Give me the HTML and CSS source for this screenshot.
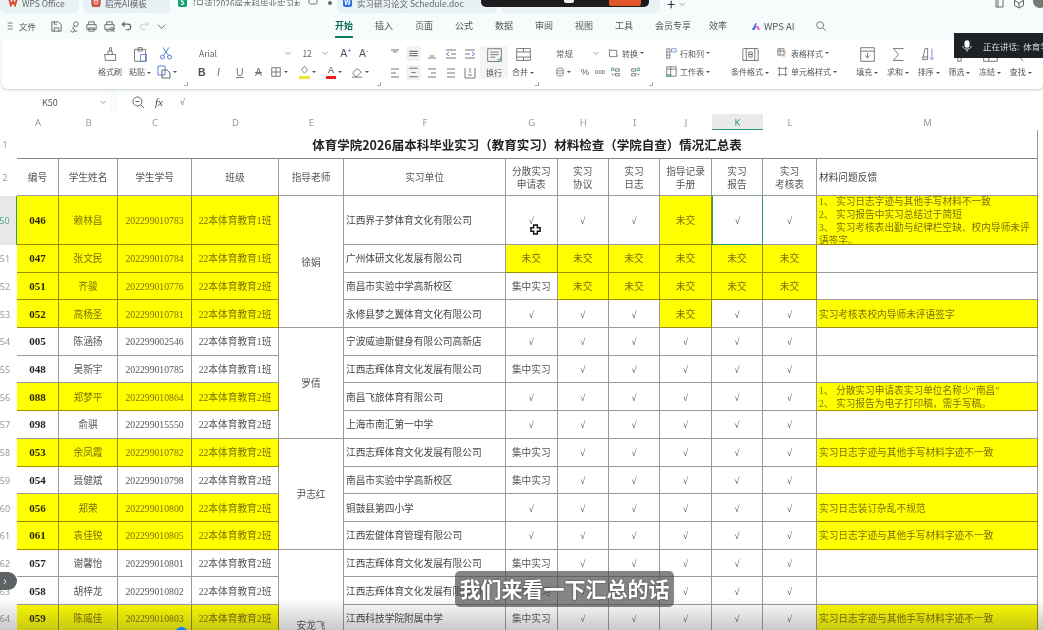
FILE: index.html
```html
<!DOCTYPE html>
<html lang="zh-CN">
<head>
    <meta charset="UTF-8">
    <title>WPS Office</title>
    <link rel="stylesheet" href="styles.css">
</head>
<body>
<div class="page">
    <div class="tabs">
        <div class="tab t-wps"><svg class="logo" viewBox="0 0 12 12"><path d="M1 1 L3.5 10 L6 5 L8.5 10 L11 1" fill="none" stroke="#e0452f" stroke-width="2.2"/></svg>WPS Office</div>
        <div class="tab t-tpl"><svg class="logo" viewBox="0 0 12 12"><rect x="1" y="0" width="10" height="12" rx="3" fill="#ee4c3c"/><path d="M6 2v3" stroke="#fff"/><circle cx="6" cy="6" r="2.4" fill="none" stroke="#fff"/></svg>稻壳AI模板</div>
        <div class="tab t-active"><span class="doc doc-s">S</span><span class="t-name">[只读]2026届本科毕业实习材</span><svg class="t-ico" viewBox="0 0 10 10"><rect x="1" y="1" width="8" height="6" rx="1.5" fill="none" stroke="#777"/></svg><span class="t-dot"></span></div>
        <div class="tab t-doc"><span class="doc doc-w">W</span>实习研习论文 Schedule.doc</div>
        <div class="tab t-next"><span class="doc doc-w"></span></div>
        <div class="tab-add">+ <svg class="chev" viewBox="0 0 8 8"><path d="M1.5 3 L4 5.5 L6.5 3"/></svg></div>
        <div class="win-btns">
            <svg viewBox="0 0 12 12"><path d="M3 1h7v9H3z M5 1v9"/></svg>
            <svg viewBox="0 0 12 12"><path d="M6 1l4.5 2.5v5L6 11 1.5 8.5v-5z M1.5 3.5L6 6l4.5-2.5 M6 6v5"/></svg>
            <span class="avatar"></span>
        </div>
    </div>

    <div class="menubar">
        <div class="quick">
            <svg class="q burger" viewBox="0 0 12 12"><path d="M2 2.5h6 M2 6h6 M2 9.5h6"/></svg>
            <span class="file">文件</span>
            <span class="q-sep"></span>
            <svg class="q" viewBox="0 0 14 14"><path d="M2 2h7l3 3v7H2z M4.5 12V8.5h5V12 M4.5 2v2.5h3"/></svg>
            <svg class="q" viewBox="0 0 14 14"><circle cx="8.5" cy="4.5" r="2.5"/><path d="M7 6.500L5 9 M5 9a2 2 0 1 1-2 2 M7 12h3"/></svg>
            <svg class="q" viewBox="0 0 14 14"><path d="M4 5V2h6v3 M2 5h10v5H2z M4 8.5h6V12H4z"/></svg>
            <svg class="q" viewBox="0 0 14 14"><path d="M4 5V2h6v3 M2 5h10v5H2z M4 10v2h3"/><circle cx="9.5" cy="10" r="2"/><path d="M11 11.5l1.5 1.5"/></svg>
            <svg class="q" viewBox="0 0 14 14"><path d="M5 2L2.5 4.5 5 7 M2.5 4.5h6a3 3 0 0 1 0 6H6" stroke-width="1.3"/></svg>
            <svg class="q q-off" viewBox="0 0 14 14"><path d="M9 2l2.5 2.5L9 7 M11.500 4.5h-6a3 3 0 0 0 0 6H8"/></svg>
            <svg class="q" viewBox="0 0 14 14"><path d="M3 5l4 4 4-4"/></svg>
        </div>
        <nav class="nav">
            <a class="nav-item on">开始</a>
            <a class="nav-item">插入</a>
            <a class="nav-item">页面</a>
            <a class="nav-item">公式</a>
            <a class="nav-item">数据</a>
            <a class="nav-item">审阅</a>
            <a class="nav-item">视图</a>
            <a class="nav-item">工具</a>
            <a class="nav-item wide">会员专享</a>
            <a class="nav-item">效率</a>
            <a class="nav-ai"><svg viewBox="0 0 12 10"><path d="M1 9L5.5 1H7L4.5 9z" fill="#3b5bf0"/><path d="M6 5l2-1 3 5H8z" fill="#ef4f9a"/></svg>WPS AI</a>
            <svg class="nav-search" viewBox="0 0 14 14"><circle cx="6" cy="6" r="4"/><path d="M9 9l3.5 3.5"/></svg>
        </nav>
    </div>

    <div class="ribbon">
        <div class="big w-brush">
            <svg viewBox="0 0 20 20"><path d="M3 10h13v7H4z M7 10V6h5v4 M9 6V2h2v4"/></svg>
            <span>格式刷</span>
        </div>
        <div class="big w-paste">
            <svg viewBox="0 0 20 20"><path d="M3 4h13v14H3z M7 2h5v4H7z"/><path class="blue" d="M10 10h7v8h-7z"/></svg>
            <span>粘贴<i class="caret"></i></span>
        </div>
        <div class="col w-clip launch">
            <div class="row"><svg class="ico blue" viewBox="0 0 14 14"><circle cx="3.5" cy="11" r="2"/><circle cx="10.5" cy="11" r="2"/><path d="M4.5 9.5L10 1.5 M9.5 9.5L4 1.5"/></svg></div>
            <div class="row"><svg class="ico" viewBox="0 0 14 14"><path class="blue" d="M1 1h7v9H1z"/><path d="M5 5h5l3 3v5H5z"/></svg><i class="caret"></i></div>
        </div>
        <div class="col w-font launch">
            <div class="row">
                <span class="select s-font">Arial<svg class="chev" viewBox="0 0 8 8"><path d="M1.5 3L4 5.5 6.5 3"/></svg></span>
                <span class="select s-size">12<svg class="chev" viewBox="0 0 8 8"><path d="M1.5 3L4 5.5 6.5 3"/></svg></span>
                <span class="glyph g-a">A<sup class="up">+</sup></span>
                <span class="glyph g-a">A<sup>-</sup></span>
            </div>
            <div class="row font-row">
                <b class="glyph">B</b>
                <em class="glyph">I</em>
                <u class="glyph">U</u>
                <s class="glyph">A</s>
                <span class="ctl c-border"><svg class="ico" viewBox="0 0 14 14"><path d="M2 2h10v10H2z M7 2v10 M2 7h10"/></svg><i class="caret"></i></span>
                <span class="ctl c-fill"><span class="swatch sw-y"><svg class="ico" viewBox="0 0 14 12"><path d="M7 1l4 5-4 4-4-4z"/></svg></span><i class="caret"></i></span>
                <span class="ctl c-color"><span class="swatch sw-r">A</span><i class="caret"></i></span>
                <span class="ctl c-erase"><svg class="ico" viewBox="0 0 14 14"><path d="M2 8l5-5 5 4-5 5H5z M1 13h12"/></svg><i class="caret"></i></span>
            </div>
        </div>
        <div class="aligns">
            <svg class="ico" viewBox="0 0 14 14"><path d="M3 3h8 M5 5h4"/></svg>
            <svg class="ico tint" viewBox="0 0 14 14"><path d="M3 5h8 M3 7h8 M3 9h8"/></svg>
            <svg class="ico" viewBox="0 0 14 14"><path d="M5 9h4 M3 11h8"/></svg>
            <svg class="ico" viewBox="0 0 14 14"><path d="M2 3h10 M2 11h10 M7 7h5"/><path class="blue" d="M5 5L2.5 7 5 9"/></svg>
            <svg class="ico" viewBox="0 0 14 14"><path d="M2 3h10 M2 11h10 M2 7h5"/><path class="blue" d="M9 5l2.5 2L9 9"/></svg>
            <svg class="ico" viewBox="0 0 14 14"><path d="M3 3h8 M3 7h5 M3 11h8"/></svg>
            <svg class="ico tint" viewBox="0 0 14 14"><path d="M3 3h8 M5 7h4 M3 11h8"/></svg>
            <svg class="ico" viewBox="0 0 14 14"><path d="M3 3h8 M6 7h5 M3 11h8"/></svg>
            <svg class="ico" viewBox="0 0 14 14"><path d="M3 3h8 M3 7h8 M3 11h8"/></svg>
            <svg class="ico" viewBox="0 0 14 14"><path d="M2 2v10 M12 2v10 M2 12h10 M5 9h4 M7 2v5"/></svg>
        </div>
        <div class="big w-wrap">
            <svg viewBox="0 0 20 20"><path d="M2 2h16v15H2z M5 6h10 M5 9h10 M5 12h6"/><path class="green" d="M17 12v3h-4"/></svg>
            <span>换行</span>
        </div>
        <div class="big w-merge launch">
            <svg viewBox="0 0 20 20"><path d="M2 3h16v14H2z M2 7h16 M2 13h16 M10 3v4 M10 13v4"/></svg>
            <span>合并<i class="caret"></i></span>
        </div>
        <div class="col w-num launch">
            <div class="row">
                <span class="select s-num">常规<svg class="chev" viewBox="0 0 8 8"><path d="M1.5 3L4 5.5 6.5 3"/></svg></span>
                <span class="ctl c-conv"><svg class="ico" viewBox="0 0 14 14"><path d="M2 3h9v8H2z"/><path class="blue" d="M1 2h2 M11 10h2"/></svg><span class="lbl">转换</span><i class="caret"></i></span>
            </div>
            <div class="row num-row">
                <span class="ctl c-db"><svg class="ico" viewBox="0 0 14 14"><ellipse cx="7" cy="3.5" rx="4.500" ry="2"/><path d="M2.5 3.5v7c0 2.500 9 2.500 9 0v-7 M2.5 7c0 2.500 9 2.500 9 0"/></svg><i class="caret"></i></span>
                <span class="glyph g-pct">%</span>
                <span class="glyph g-thou">000</span>
                <svg class="ico" viewBox="0 0 14 14"><path class="green" d="M2 2h3v3H2z"/><path d="M7 3h5v3H7z M7 9h5v3H7z M2 9l2 2 2-2"/></svg>
                <svg class="ico" viewBox="0 0 14 14"><path class="green" d="M9 2h3v3H9z"/><path d="M2 3h5v3H2z M2 9h5v3H2z M8 9l2 2 2-2"/></svg>
            </div>
        </div>
        <div class="col w-rows">
            <div class="row"><svg class="ico" viewBox="0 0 14 14"><path d="M1 1h4v12H1z M1 5h4 M1 9h4"/><path class="blue" d="M7 1h6v4H7z"/></svg><span class="lbl">行和列</span><i class="caret"></i></div>
            <div class="row"><svg class="ico" viewBox="0 0 14 14"><path d="M1 1h12v12H1z M1 4h12 M6 1v12"/><path class="green" d="M1 11h5v2H1z"/></svg><span class="lbl">工作表</span><i class="caret"></i></div>
        </div>
        <div class="big w-cond">
            <svg viewBox="0 0 20 20"><path d="M1 4v13 M19 4v13 M1 3h18 M1 17h18 M5 3v14 M15 3v14 M8 7h4v3H8z M8 10h4v3H8z"/></svg>
            <span>条件格式<i class="caret"></i></span>
        </div>
        <div class="col w-style">
            <div class="row"><svg class="ico" viewBox="0 0 14 14"><path d="M1 1h8v8H1z M1 4h8 M4 1v8"/><path class="orange" d="M6 11L12 4 M8 12l3-3"/></svg><span class="lbl">表格样式</span><i class="caret"></i></div>
            <div class="row"><svg class="ico" viewBox="0 0 14 14"><path d="M3 1v12 M11 1v12 M1 3h12 M1 11h12"/></svg><span class="lbl">单元格样式</span><i class="caret"></i></div>
        </div>
        <div class="big w-end">
            <svg viewBox="0 0 20 20"><path d="M2 2h16v16H2z M2 6h16 M10 8v6 M7 11l3 3 3-3"/></svg>
            <span>填充<i class="caret"></i></span>
        </div>
        <div class="big w-end">
            <svg viewBox="0 0 20 20"><path d="M16 3H4l6 7-6 7h12"/></svg>
            <span>求和<i class="caret"></i></span>
        </div>
        <div class="big w-end">
            <svg viewBox="0 0 20 20"><path d="M3 16L6 3h3v13H3 M3 13h6"/><path class="blue" d="M14 3v13 M11.5 13.5L14 16l2.5-2.5"/></svg>
            <span>排序<i class="caret"></i></span>
        </div>
        <div class="big w-end">
            <svg viewBox="0 0 20 20"><path d="M8 12v6h4v-6"/></svg>
            <span>筛选<i class="caret"></i></span>
        </div>
        <div class="big w-end">
            <svg viewBox="0 0 20 20"><path d="M2 11v7h16v-7 M8 11v7"/></svg>
            <span>冻结<i class="caret"></i></span>
        </div>
        <div class="big w-end">
            <svg viewBox="0 0 20 20"><path d="M8 12l5 6"/></svg>
            <span>查找<i class="caret"></i></span>
        </div>
    </div>

    <div class="formula">
        <div class="namebox">K50<svg class="chev" viewBox="0 0 8 8"><path d="M1.5 3L4 5.5 6.5 3"/></svg></div>
        <div class="fx">
            <svg class="ico" viewBox="0 0 14 14"><circle cx="6.5" cy="6.5" r="4.5"/><path d="M4.5 6.5h4 M10 10l3 3"/></svg>
            <i class="fx-label">fx</i>
            <span class="fx-check">√</span>
        </div>
    </div>

    <div class="sheet">
        <div class="corner"></div>
        <div class="ch">A</div><div class="ch">B</div><div class="ch">C</div><div class="ch">D</div><div class="ch">E</div><div class="ch">F</div><div class="ch">G</div><div class="ch">H</div><div class="ch">I</div><div class="ch">J</div><div class="ch sel">K</div><div class="ch">L</div><div class="ch">M</div>

        <div class="rh">1</div>
        <div class="title">体育学院2026届本科毕业实习（教育实习）材料检查（学院自查）情况汇总表</div>

        <div class="rh">2</div>
        <div class="c">编号</div><div class="c">学生姓名</div><div class="c">学生学号</div><div class="c">班级</div><div class="c">指导老师</div><div class="c">实习单位</div><div class="c">分散实习<br>申请表</div><div class="c">实习<br>协议</div><div class="c">实习<br>日志</div><div class="c">指导记录<br>手册</div><div class="c">实习<br>报告</div><div class="c">实习<br>考核表</div><div class="c l">材料问题反馈</div>

        <div class="rh sel">50</div>
        <div class="c id y">046</div><div class="c y">赖林昌</div><div class="c y">202299010783</div><div class="c y">22本体育教育1班</div>
        <div class="c m4">徐娟</div>
        <div class="c l">江西界子梦体育文化有限公司</div><div class="c">√</div><div class="c">√</div><div class="c">√</div><div class="c y">未交</div><div class="c active">√</div><div class="c">√</div>
        <div class="c l y note">1、 实习日志字迹与其他手写材料不一致<br>2、 实习报告中实习总结过于简短<br>3、 实习考核表出勤与纪律栏空缺、校内导师未评语签字。</div>

        <div class="rh">51</div>
        <div class="c id y">047</div><div class="c y">张文民</div><div class="c y">202299010784</div><div class="c y">22本体育教育1班</div>
        <div class="c l">广州体研文化发展有限公司</div><div class="c y">未交</div><div class="c y">未交</div><div class="c y">未交</div><div class="c y">未交</div><div class="c y">未交</div><div class="c y">未交</div><div class="c"></div>

        <div class="rh">52</div>
        <div class="c id y">051</div><div class="c y">齐骏</div><div class="c y">202299010776</div><div class="c y">22本体育教育2班</div>
        <div class="c l">南昌市实验中学高新校区</div><div class="c">集中实习</div><div class="c y">未交</div><div class="c y">未交</div><div class="c y">未交</div><div class="c y">未交</div><div class="c y">未交</div><div class="c"></div>

        <div class="rh">53</div>
        <div class="c id y">052</div><div class="c y">高杨圣</div><div class="c y">202299010781</div><div class="c y">22本体育教育2班</div>
        <div class="c l">永修县梦之翼体育文化有限公司</div><div class="c">√</div><div class="c">√</div><div class="c">√</div><div class="c y">未交</div><div class="c">√</div><div class="c">√</div><div class="c l y">实习考核表校内导师未评语签字</div>

        <div class="rh">54</div>
        <div class="c id">005</div><div class="c">陈涵扬</div><div class="c">202299002546</div><div class="c">22本体育教育1班</div>
        <div class="c m4">罗倩</div>
        <div class="c l">宁波威迪斯健身有限公司高新店</div><div class="c">√</div><div class="c">√</div><div class="c">√</div><div class="c">√</div><div class="c">√</div><div class="c">√</div><div class="c"></div>

        <div class="rh">55</div>
        <div class="c id">048</div><div class="c">吴新宇</div><div class="c">202299010785</div><div class="c">22本体育教育1班</div>
        <div class="c l">江西志辉体育文化发展有限公司</div><div class="c">集中实习</div><div class="c">√</div><div class="c">√</div><div class="c">√</div><div class="c">√</div><div class="c">√</div><div class="c"></div>

        <div class="rh">56</div>
        <div class="c id y">088</div><div class="c y">郑梦平</div><div class="c y">202299010864</div><div class="c y">22本体育教育2班</div>
        <div class="c l">南昌飞旅体育有限公司</div><div class="c">√</div><div class="c">√</div><div class="c">√</div><div class="c">√</div><div class="c">√</div><div class="c">√</div>
        <div class="c l y note">1、 分散实习申请表实习单位名称少“南昌”<br>2、 实习报告为电子打印稿，需手写稿。</div>

        <div class="rh">57</div>
        <div class="c id">098</div><div class="c">俞骐</div><div class="c">202299015550</div><div class="c">22本体育教育2班</div>
        <div class="c l">上海市南汇第一中学</div><div class="c">√</div><div class="c">√</div><div class="c">√</div><div class="c">√</div><div class="c">√</div><div class="c">√</div><div class="c"></div>

        <div class="rh">58</div>
        <div class="c id y">053</div><div class="c y">余凤霞</div><div class="c y">202299010782</div><div class="c y">22本体育教育2班</div>
        <div class="c m4">尹志红</div>
        <div class="c l">江西志辉体育文化发展有限公司</div><div class="c">集中实习</div><div class="c">√</div><div class="c">√</div><div class="c">√</div><div class="c">√</div><div class="c">√</div><div class="c l y">实习日志字迹与其他手写材料字迹不一致</div>

        <div class="rh">59</div>
        <div class="c id">054</div><div class="c">聂健斌</div><div class="c">202299010798</div><div class="c">22本体育教育2班</div>
        <div class="c l">南昌市实验中学高新校区</div><div class="c">集中实习</div><div class="c">√</div><div class="c">√</div><div class="c">√</div><div class="c">√</div><div class="c">√</div><div class="c"></div>

        <div class="rh">60</div>
        <div class="c id y">056</div><div class="c y">郑荣</div><div class="c y">202299010800</div><div class="c y">22本体育教育2班</div>
        <div class="c l">铜鼓县第四小学</div><div class="c">√</div><div class="c">√</div><div class="c">√</div><div class="c">√</div><div class="c">√</div><div class="c">√</div><div class="c l y">实习日志装订杂乱不规范</div>

        <div class="rh">61</div>
        <div class="c id y">061</div><div class="c y">袁佳锐</div><div class="c y">202299010805</div><div class="c y">22本体育教育2班</div>
        <div class="c l">江西宏健体育管理有限公司</div><div class="c">√</div><div class="c">√</div><div class="c">√</div><div class="c">√</div><div class="c">√</div><div class="c">√</div><div class="c l y">实习日志字迹与其他手写材料字迹不一致</div>

        <div class="rh">62</div>
        <div class="c id">057</div><div class="c">谢馨怡</div><div class="c">202299010801</div><div class="c">22本体育教育2班</div>
        <div class="c m5">安龙飞</div>
        <div class="c l">江西志辉体育文化发展有限公司</div><div class="c">集中实习</div><div class="c">√</div><div class="c">√</div><div class="c">√</div><div class="c">√</div><div class="c">√</div><div class="c"></div>

        <div class="rh">63</div>
        <div class="c id">058</div><div class="c">胡梓龙</div><div class="c">202299010802</div><div class="c">22本体育教育2班</div>
        <div class="c l">江西志辉体育文化发展有限公司</div><div class="c">集中实习</div><div class="c">√</div><div class="c">√</div><div class="c">√</div><div class="c">√</div><div class="c">√</div><div class="c"></div>

        <div class="rh">64</div>
        <div class="c id y">059</div><div class="c y">陈威佳</div><div class="c y">202299010803</div><div class="c y">22本体育教育2班</div>
        <div class="c l">江西科技学院附属中学</div><div class="c">集中实习</div><div class="c">√</div><div class="c">√</div><div class="c">√</div><div class="c">√</div><div class="c">√</div><div class="c l y">实习日志字迹与其他手写材料字迹不一致</div>
    </div>

    <!-- things from the screen recording that sit over the app -->
    <div class="rec-bar"><span class="rec-mark"></span><span class="rec-btn"></span></div>
    <div class="speaking">
        <svg viewBox="0 0 12 16"><rect x="3" y="1" width="6" height="9" rx="3" fill="#fff"/><path d="M1 8c0 5 10 5 10 0 M6 12v3" stroke="#fff" fill="none"/></svg>
        <span class="sp-sep"></span>正在讲话:&nbsp; 体育学院
    </div>
    <svg class="cursor" viewBox="0 0 12 12"><path d="M4 1h4v3h3v4H8v3H4V8H1V4h3z" fill="#fff" stroke="#111" stroke-width="1.6"/></svg>
    <div class="fade"></div>
    <div class="side-pill">›</div>
    <div class="play-dot"></div>
    <div class="subtitle">我们来看一下汇总的话</div>
</div>
</body>
</html>
```

FILE: styles.css
```css
* {
    margin: 0;
    padding: 0;
    box-sizing: border-box;
}
body {
    font-family: "Noto Sans CJK SC", "Noto Sans", sans-serif;
    background-color: #fff;
    overflow: hidden;
}
.page {
    position: relative;
    width: 1043px;
    height: 630px;
    overflow: hidden;
    background-color: #f6fbfc;
    color: #555;
    font-size: 9px;
    filter: blur(0.4px);
}
svg {
    fill: none;
    stroke: #666;
    stroke-width: 1;
    flex: none;
}
.blue { stroke: #5a7fd8; }
.green { stroke: #2f9a76; }
.orange { stroke: #e88a4a; }

/* tabs */
.tabs {
    display: flex;
    height: 13px;
    font-size: 8.5px;
    line-height: 6px;
    color: #666;
}
.tab {
    display: flex;
    align-items: flex-start;
    gap: 4px;
    height: 13px;
    margin-right: 4px;
    background-color: #e8f2f4;
    border-radius: 0 0 5px 5px;
    white-space: nowrap;
}
.t-wps { width: 79px; padding-left: 8px; }
.t-tpl { width: 87px; padding-left: 8px; margin-right: 0; }
.t-active { width: 167px; padding-left: 8px; margin-right: 0; background-color: #f6fbfc; }
.t-doc { width: 160px; padding-left: 6px; gap: 5px; }
.t-next { width: 159px; padding-left: 6px; margin-right: 0; }
.logo { width: 10px; height: 10px; margin-top: -3px; }
.doc {
    width: 9px;
    height: 10px;
    margin-top: -3px;
    border-radius: 2px;
    color: #fff;
    font-size: 7px;
    line-height: 10px;
    font-weight: 700;
    text-align: center;
}
.doc-s { background-color: #12a06f; }
.doc-w { background-color: #2a6fe8; }
.t-name { width: 107px; margin-left: 2px; overflow: hidden; }
.t-ico { width: 10px; height: 10px; margin: -3px 0 0 4px; }
.t-dot { width: 4px; height: 4px; margin: 1px 0 0 6px; border-radius: 50%; background-color: #666; }
.tab-add {
    display: flex;
    align-items: flex-start;
    gap: 3px;
    margin-left: 7px;
    color: #333;
    font-size: 15px;
    line-height: 8px;
}
.chev { width: 8px; height: 8px; stroke: #999; }
.win-btns {
    display: flex;
    gap: 8px;
    margin-left: auto;
    margin-right: -4px;
}
.win-btns svg { width: 12px; height: 12px; margin-top: -3px; }
.avatar { width: 14px; height: 14px; margin-top: -6px; border-radius: 50%; background-color: #777; }

/* menu row */
.menubar {
    display: flex;
    align-items: center;
    height: 26px;
}
.quick {
    display: flex;
    align-items: center;
    width: 335px;
    padding-left: 6px;
}
.q { width: 13px; height: 13px; margin-right: 4.5px; }
.burger { width: 10px; height: 12px; margin-right: 3px; }
.q-off { stroke: #ccc; }
.file { font-size: 8.5px; }
.q-sep { width: 14px; }
.nav { display: flex; align-items: center; font-size: 9px; }
.nav-item {
    display: block;
    width: 18px;
    margin-right: 22px;
    line-height: 24px;
    height: 24px;
    white-space: nowrap;
    color: #555;
}
.nav-item.wide { width: 36px; margin-right: 18px; }
.nav-item.on {
    color: #0b6e52;
    font-weight: 700;
    border-bottom: 2px solid #0f7d5e;
}
.nav-ai {
    display: flex;
    align-items: center;
    gap: 3px;
    width: 64px;
    margin-left: 2px;
    font-size: 9.5px;
}
.nav-ai svg { width: 10px; height: 9px; stroke: none; }
.nav-search { width: 12px; height: 12px; }

/* ribbon */
.ribbon {
    display: flex;
    align-items: flex-start;
    width: 1041px;
    height: 50px;
    margin-left: 2px;
    padding: 5px 0 0 94px;
    background-color: #fff;
    border-radius: 5px;
    box-shadow: 0 1px 2px rgba(0, 0, 0, 0.18);
    font-size: 8px;
}
.big {
    position: relative;
    display: flex;
    flex-direction: column;
    align-items: center;
    white-space: nowrap;
}
.big svg {
    width: 17px;
    height: 17px;
    margin-top: 2px;
}
.big span { line-height: 18px; }
.caret {
    display: inline-block;
    width: 0;
    height: 0;
    margin-left: 2px;
    vertical-align: middle;
    border: 2px solid transparent;
    border-top: 2.5px solid #555;
    border-bottom: 0;
}
.col {
    position: relative;
    display: flex;
    flex-direction: column;
    gap: 0;
}
.row {
    display: flex;
    align-items: center;
    height: 18.5px;
    white-space: nowrap;
}
.launch::after {
    content: "";
    position: absolute;
    right: -3px;
    top: 38px;
    width: 3px;
    height: 3px;
    border-right: 1px solid #aaa;
    border-bottom: 1px solid #aaa;
}
.ico { width: 14px; height: 14px; }
.lbl { margin-left: 3px; }
.w-brush { width: 28px; }
.w-paste { width: 30px; margin-left: 1px; }
.w-clip { width: 30px; padding-left: 4px; margin-right: 12px; }
.w-clip .row:last-child { margin-left: -2px; }
.w-font { width: 181px; }
.select {
    display: flex;
    align-items: center;
    justify-content: space-between;
    height: 16px;
    padding: 0 2px;
    color: #666;
    font-size: 8.5px;
}
.s-font { width: 99px; padding-right: 3px; }
.s-size { width: 32px; margin: 0 8px 0 5px; padding-right: 3px; }
.glyph {
    display: block;
    width: 19px;
    text-align: left;
    font-family: "Liberation Sans", sans-serif;
    font-size: 10.5px;
    color: #555;
}
em.glyph, u.glyph, s.glyph { color: #777; }
.g-a sup { font-size: 7px; line-height: 0; color: #555; }
.g-a sup.up { color: #4a6fd0; }
.font-row { padding-left: 1px; }
.ctl { display: flex; align-items: center; }
.c-border { margin-left: -4px; }
.c-border .ico, .c-erase .ico { width: 12px; height: 12px; }
.c-fill { margin-left: 11px; }
.c-color { margin-left: 10px; }
.c-erase { margin-left: 9px; }
.swatch {
    display: block;
    width: 10px;
    height: 14px;
    text-align: center;
    font-family: "Liberation Sans", sans-serif;
    font-size: 9px;
    line-height: 11px;
}
.sw-y { border-bottom: 3px solid #f1e52d; width: 11px; }
.sw-y .ico { width: 11px; height: 10px; }
.sw-r { border-bottom: 3px solid #e81f1f; color: #444; }
.aligns {
    display: grid;
    grid-template-columns: repeat(5, 18.6px);
    grid-auto-rows: 19px;
    width: 94px;
    margin-left: 8px;
    justify-items: center;
    align-items: center;
}
.aligns svg { stroke: #777; }
.tint { background-color: #f1f3f3; border-radius: 2px; width: 15px; height: 15px; }
.w-wrap {
    width: 28px;
    height: 33px;
    margin-top: 2px;
    background-color: #f3f5f5;
    border-radius: 3px;
}
.w-wrap svg { margin-top: 1px; }
.w-wrap span { line-height: 15px; margin-top: 1px; }
.w-merge { width: 26px; margin-left: 2px; margin-right: 17px; }
.w-num { width: 97px; }
.s-num { width: 50px; padding-left: 3px; padding-right: 3px; }
.c-conv { margin-left: 5px; }
.c-conv .ico { width: 11px; height: 11px; }
.num-row { padding-left: 2px; }
.c-db .ico { width: 10px; height: 12px; }
.g-pct { width: 18px; margin-left: 10px; font-size: 9px; }
.g-thou { width: 19px; font-size: 6px; }
.num-row > .ico { width: 11px; height: 12px; margin-right: 9px; }
.w-rows { width: 61px; margin-left: 16px; }
.w-rows .ico, .w-style .ico { width: 11px; height: 11px; }
.w-cond { width: 44px; margin-right: 5px; margin-left: 1px; }
.w-style { width: 75px; }
.w-end { width: 30.7px; }

/* formula bar */
.formula {
    display: flex;
    gap: 7px;
    height: 20px;
    margin: 3px 0 0;
}
.namebox {
    display: flex;
    align-items: center;
    justify-content: space-between;
    width: 110px;
    padding: 0 3px 0 42px;
    background-color: #fff;
    font-size: 9px;
}
.fx {
    display: flex;
    align-items: center;
    flex: 1;
    padding-left: 14px;
    background-color: #fff;
    border-radius: 3px 0 0 3px;
}
.fx-label { margin-left: 10px; font-family: "Liberation Serif", serif; font-size: 11px; color: #444; }
.fx-check { margin-left: 17px; font-family: "Liberation Serif", serif; font-size: 9px; }

/* sheet */
.sheet {
    display: grid;
    grid-template-columns: 17px 42px 59px 74px 87px 65px 162px 51.5px 51.5px 51px 52px 51px 54px 221px;
    grid-template-rows: 18px 29px 37px 49px;
    grid-auto-rows: 27.7px;
    background-color: #fff;
    font-family: "Liberation Serif", "Noto Sans CJK SC", serif;
    font-size: 9.7px;
    line-height: 13px;
    color: #555;
}
.corner { background-color: #fff; }
.ch {
    display: flex;
    align-items: center;
    justify-content: center;
    padding-top: 3px;
    font-family: "Noto Sans", sans-serif;
    color: #999;
    font-size: 9.5px;
}
.ch.sel {
    margin-top: 2px;
    padding-top: 1px;
    background-color: #eaeaea;
    border-bottom: 1px solid #2f9a76;
    color: #2f9a76;
}
.rh {
    display: flex;
    align-items: center;
    justify-content: center;
    padding-right: 7px;
    font-family: "Noto Sans", sans-serif;
    font-size: 9px;
    color: #999;
}
.rh.sel {
    background-color: #e8e8e8;
    border-right: 1px solid #2f9a76;
    color: #5aa58d;
}
.title {
    grid-column: span 13;
    display: flex;
    align-items: center;
    justify-content: center;
    border-right: 1px solid #999;
    border-bottom: 1px solid #888;
    font-family: "Noto Sans CJK SC", sans-serif;
    font-size: 12.5px;
    font-weight: 700;
    color: #222;
}
.c {
    display: flex;
    align-items: center;
    justify-content: center;
    padding-top: 1px;
    text-align: center;
    border-right: 1px solid #9a9a9a;
    border-bottom: 1px solid #9a9a9a;
    overflow: hidden;
}
.l {
    justify-content: flex-start;
    padding-left: 2px;
    text-align: left;
    color: #444;
}
.id {
    font-size: 11px;
    font-weight: 700;
    color: #222;
}
.y {
    background-color: #ffff00;
    border-color: #a08c00;
    color: #7f6f00;
}
.id.y { color: #2b2600; }
.m4 { grid-row: span 4; padding-top: 2px; }
.m5 { grid-row: span 5; padding-top: 15px; }
.note { line-height: 13px; }
.active {
    border: 1px solid #2f9a76;
    border-top-width: 0;
}

/* recording overlays */
.rec-bar {
    position: absolute;
    left: 481px;
    top: 0;
    width: 168px;
    height: 7px;
    background-color: #1c1c1e;
    border-radius: 0 0 5px 5px;
}
.rec-mark {
    position: absolute;
    left: 83px;
    top: 0;
    width: 10px;
    height: 3px;
    background-color: #eee;
    border-radius: 0 0 2px 2px;
}
.rec-btn {
    position: absolute;
    right: 8px;
    top: 0;
    width: 32px;
    height: 6px;
    background-color: #e2552a;
    border-radius: 0 0 2px 2px;
}
.speaking {
    position: absolute;
    left: 954px;
    top: 33px;
    display: flex;
    align-items: center;
    width: 89px;
    height: 25px;
    padding-left: 8px;
    background-color: #1e2226;
    color: #ddd;
    font-size: 8.5px;
    white-space: nowrap;
}
.speaking svg { width: 10px; height: 14px; stroke: none; }
.sp-sep { width: 1px; height: 12px; margin: 0 5px 0 6px; background-color: #444; }
.cursor {
    position: absolute;
    left: 530px;
    top: 224px;
    width: 11px;
    height: 11px;
}
.fade {
    position: absolute;
    left: 0;
    right: 0;
    bottom: 0;
    height: 32px;
    background: linear-gradient(to bottom, rgba(60, 60, 60, 0), rgba(60, 60, 60, 0.28));
}
.side-pill {
    position: absolute;
    left: 0;
    top: 572px;
    width: 17px;
    height: 18px;
    background-color: #5e6264;
    border-radius: 0 9px 9px 0;
    color: #eee;
    font-size: 12px;
    line-height: 15px;
    padding-left: 3px;
}
.play-dot {
    position: absolute;
    left: 175px;
    top: 627px;
    width: 13px;
    height: 13px;
    background-color: #1677ff;
    border-radius: 50%;
}
.subtitle {
    position: absolute;
    left: 455px;
    top: 571px;
    width: 219px;
    height: 36px;
    background-color: rgba(70, 70, 70, 0.66);
    border-radius: 5px;
    color: #fff;
    font-size: 21px;
    font-weight: 700;
    line-height: 34px;
    text-align: center;
    white-space: nowrap;
    text-shadow: 0 0 2px #333;
}
```
